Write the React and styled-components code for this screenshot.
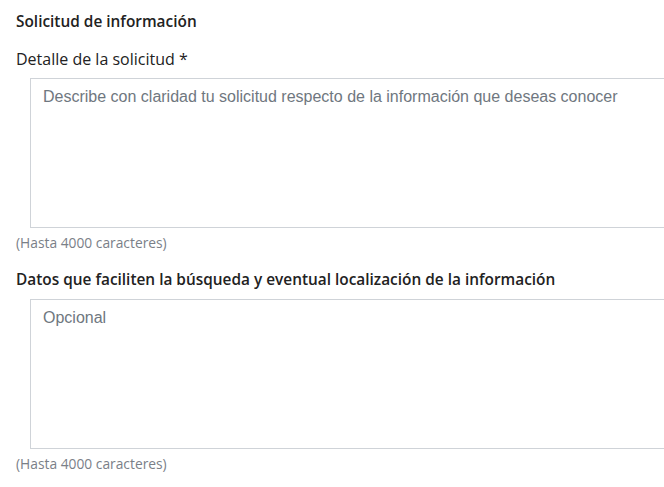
import React from "react"
import styled, { createGlobalStyle } from "styled-components"

const GlobalStyle = createGlobalStyle`
  html, body {
    margin: 0;
    background: #fff;
  }
`

const Form = styled.form`
  font-family: "Open Sans", "Noto Sans", sans-serif;
  color: #222;
  padding: 11px 0 0 16px;
  overflow: hidden;
`

const Title = styled.h2`
  font-size: 15.4px;
  font-weight: 600;
  line-height: 22px;
  margin: 0 0 15px;
`

const Field = styled.div`
  display: flex;
  flex-direction: column;
  margin-bottom: ${props => props.gap || "0"};
`

const Label = styled.label`
  font-size: ${props => (props.strong ? "15.4px" : "16px")};
  font-weight: ${props => (props.strong ? 600 : 400)};
  line-height: 22px;
  color: #222;
  margin-bottom: 8px;
`

const TextArea = styled.textarea`
  box-sizing: border-box;
  display: block;
  margin-left: 14px;
  width: calc(100% - 14px);
  height: 150px;
  padding: 8px 12px;
  border: 1px solid #cfd3d8;
  border-right: none;
  border-radius: 0;
  resize: none;
  outline: none;
  font-family: "Liberation Sans", Arial, sans-serif;
  font-size: 16px;
  line-height: 20px;
  color: #333;

  &::placeholder {
    color: #6f7780;
    opacity: 1;
  }
`

const Hint = styled.span`
  font-size: 13.8px;
  line-height: 18px;
  color: #7a8088;
  margin-top: 6px;
`

const App = () => (
  <>
    <GlobalStyle />
    <Form>
      <Title>Solicitud de información</Title>
      <Field gap="17px">
        <Label htmlFor="detalle">Detalle de la solicitud *</Label>
        <TextArea
          id="detalle"
          maxLength={4000}
          placeholder="Describe con claridad tu solicitud respecto de la información que deseas conocer"
        />
        <Hint>(Hasta 4000 caracteres)</Hint>
      </Field>
      <Field>
        <Label htmlFor="datos" strong>
          Datos que faciliten la búsqueda y eventual localización de la información
        </Label>
        <TextArea id="datos" maxLength={4000} placeholder="Opcional" />
        <Hint>(Hasta 4000 caracteres)</Hint>
      </Field>
    </Form>
  </>
)

export default App
